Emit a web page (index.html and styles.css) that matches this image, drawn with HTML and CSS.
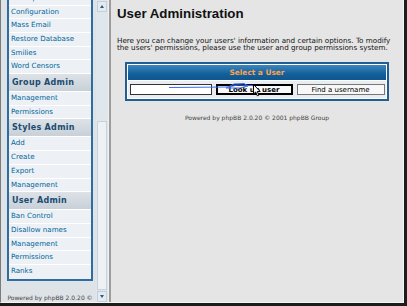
FILE: index.html
```html
<!DOCTYPE html>
<html lang="en">
<head>
    <meta charset="UTF-8">
    <title>User Administration</title>
    <link rel="stylesheet" href="styles.css">
</head>
<body>
    <div class="frames">
        <aside class="nav-frame">
            <div class="nav-view">
                <div class="nav-list">
                    <a class="nav-item" href="#">Backup Database</a>
                    <a class="nav-item" href="#">Configuration</a>
                    <a class="nav-item" href="#">Mass Email</a>
                    <a class="nav-item" href="#">Restore Database</a>
                    <a class="nav-item" href="#">Smilies</a>
                    <a class="nav-item" href="#">Word Censors</a>
                    <div class="nav-cat">Group Admin</div>
                    <a class="nav-item" href="#">Management</a>
                    <a class="nav-item" href="#">Permissions</a>
                    <div class="nav-cat">Styles Admin</div>
                    <a class="nav-item" href="#">Add</a>
                    <a class="nav-item" href="#">Create</a>
                    <a class="nav-item" href="#">Export</a>
                    <a class="nav-item" href="#">Management</a>
                    <div class="nav-cat">User Admin</div>
                    <a class="nav-item" href="#">Ban Control</a>
                    <a class="nav-item" href="#">Disallow names</a>
                    <a class="nav-item" href="#">Management</a>
                    <a class="nav-item" href="#">Permissions</a>
                    <a class="nav-item" href="#">Ranks</a>
                </div>
                <p class="nav-powered">Powered by phpBB 2.0.20 &copy; 2001 phpBB Group</p>
            </div>
            <div class="scrollbar">
                <div class="sb-btn"><span class="sb-arrow-up"></span></div>
                <div class="sb-track"></div>
                <div class="sb-thumb"></div>
                <div class="sb-btn"><span class="sb-arrow-down"></span></div>
            </div>
        </aside>

        <div class="frame-split"></div>

        <main class="main-frame">
            <h1>User Administration</h1>
            <p class="intro">Here you can change your users' information and certain options. To modify the users' permissions, please use the user and group permissions system.</p>

            <form class="forumline">
                <div class="forum-head">Select a User</div>
                <div class="forum-row">
                    <input type="text" class="post-input" name="username">
                    <button type="button" class="main-button">Look up user</button>
                    <button type="button" class="lite-button">Find a username</button>

                    <!-- drag mark and pointer from the capture -->
                    <svg class="drag-mark" width="96" height="16" viewBox="0 0 96 16">
                        <path d="M1 5.5 L60 5 L70 3 L84 3.5 L88 5" fill="none" stroke="#3d6cf0" stroke-width="1"/>
                        <path d="M58 6 L66 2 L76 1.5 L80 4 L72 6 Z" fill="none" stroke="#3d6cf0" stroke-width="1"/>
                    </svg>
                    <svg class="pointer" width="8" height="13" viewBox="0 0 8 13">
                        <path d="M0.5 0.5 L0.5 10 L2.7 8 L4.3 11.8 L5.8 11.2 L4.3 7.5 L7.2 7.5 Z" fill="#fff" stroke="#000" stroke-width="1" stroke-linejoin="round"/>
                    </svg>
                </div>
            </form>

            <p class="copyright">Powered by phpBB 2.0.20 &copy; 2001 phpBB Group</p>
        </main>
    </div>
</body>
</html>
```

FILE: styles.css
```css
* {
    margin: 0;
    padding: 0;
    box-sizing: border-box;
}

body {
    width: 407px;
    height: 306px;
    background: #1c1c1c;
    font-family: "DejaVu Sans", Verdana, sans-serif;
    overflow: hidden;
}

.frames {
    display: flex;
    width: 404px;
    height: 303px;
    border-left: 1px solid #7b7b7b;
    border-right: 1px solid #f4f4f4;
    border-bottom: 1px solid #f4f4f4;
    overflow: hidden;
}

/* left navigation frame */

.nav-frame {
    display: flex;
    width: 107px;
    flex-shrink: 0;
    background: #dee3e7;
}

.nav-view {
    width: 95px;
    padding: 0 3px 0 6px;
    overflow: hidden;
}

.nav-list {
    display: flex;
    flex-direction: column;
    margin-top: -8.05px;
    border: 2px solid #2f6c9f;
    border-top: none;
    background: #fff;
}

.nav-item {
    display: block;
    height: 13.7px;
    line-height: 12.7px;
    padding-left: 2px;
    border-bottom: 1px solid #fff;
    background: #edf1f5;
    color: #006699;
    font-size: 7.1px;
    text-decoration: none;
    white-space: nowrap;
}

.nav-item:last-child {
    border-bottom: none;
}

.nav-cat {
    height: 18px;
    line-height: 17px;
    padding-left: 3px;
    border-bottom: 1px solid #fff;
    background: linear-gradient(#dde2e7, #c8d0d8);
    color: #1b4b70;
    font-size: 8px;
    font-weight: bold;
    letter-spacing: 0.3px;
}

.nav-powered {
    margin-top: 13px;
    text-align: center;
    color: #444;
    font-size: 6px;
    line-height: 8px;
}

.scrollbar {
    display: flex;
    flex-direction: column;
    width: 12px;
    background: #dfe6ec;
}

.sb-btn {
    height: 11px;
    margin: 1px 1px 0;
    background: #e3eaf0;
    border: 1px solid #c3ced8;
    display: flex;
    align-items: center;
    justify-content: center;
}

.sb-arrow-up,
.sb-arrow-down {
    width: 0;
    height: 0;
    border-left: 2.5px solid transparent;
    border-right: 2.5px solid transparent;
}

.sb-arrow-up {
    border-bottom: 3px solid #2a5a86;
}

.sb-arrow-down {
    border-top: 3px solid #2a5a86;
}

.sb-track {
    height: 109px;
}

.sb-thumb {
    flex: 1;
    margin: 0 1px;
    background: #edf1f4;
    border: 1px solid #c8d2db;
}

.frame-split {
    width: 3px;
    flex-shrink: 0;
    background: #9d9d9d;
    border-left: 1px solid #efefef;
}

/* main frame */

.main-frame {
    flex: 1;
    padding: 6px 6px 0;
    background: #e5e5e5;
    color: #000;
}

.main-frame h1 {
    font-family: "Liberation Sans", Arial, sans-serif;
    font-size: 13.3px;
    line-height: 16px;
    font-weight: bold;
    color: #111;
}

.intro {
    margin-top: 14.5px;
    font-size: 7.2px;
    line-height: 7.4px;
    color: #111;
}

.forumline {
    width: 264px;
    margin: 11px auto 0;
    border: 2px solid #1f5f94;
    background: #fff;
    padding: 1px;
}

.forum-head {
    height: 15px;
    line-height: 15px;
    text-align: center;
    background: linear-gradient(#3c86be, #13609a 60%, #0e568e);
    color: #ffa34f;
    font-size: 7.4px;
    font-weight: bold;
}

.forum-row {
    position: relative;
    display: flex;
    justify-content: center;
    align-items: center;
    gap: 4px;
    height: 17px;
    margin-top: 1px;
    background: #e9edf1;
}

.post-input {
    width: 82px;
    height: 11px;
    border: 1px solid #333;
    background: #fff;
}

.main-button,
.lite-button {
    height: 11px;
    font-family: "DejaVu Sans", Verdana, sans-serif;
    font-size: 7px;
    line-height: 8px;
    color: #000;
}

.main-button {
    width: 77px;
    border: 2px solid #000;
    background: #fafafa;
    font-weight: bold;
}

.lite-button {
    width: 88px;
    border: 1px solid #777;
    background: #f8f8f8;
}

.drag-mark {
    position: absolute;
    left: 40px;
    top: 1px;
}

.pointer {
    position: absolute;
    left: 125px;
    top: 3px;
}

.copyright {
    margin-top: 13px;
    text-align: center;
    color: #444;
    font-size: 6px;
    line-height: 8px;
}
```
